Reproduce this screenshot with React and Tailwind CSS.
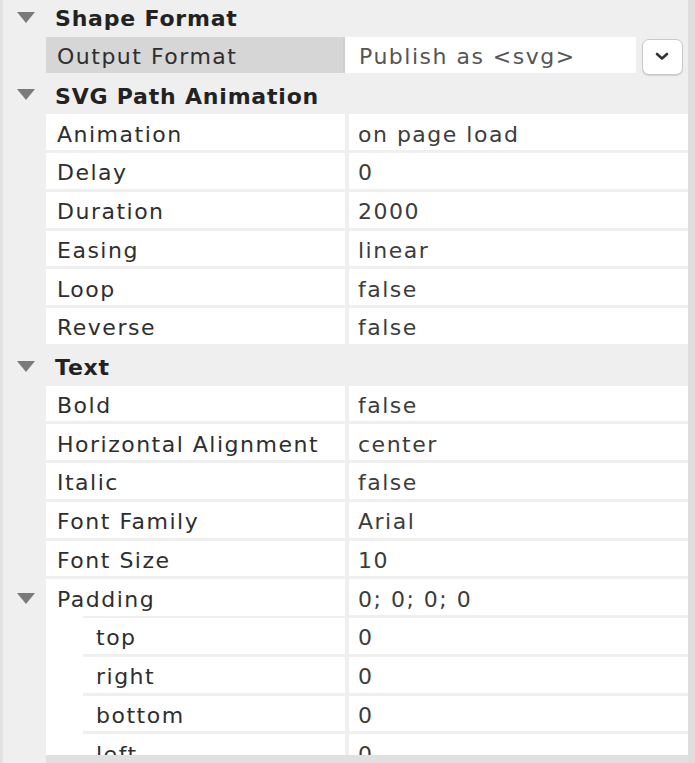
const font = "font-['DejaVu_Sans',sans-serif] text-[22px] tracking-[1.5px]";
const boldFont = "font-['DejaVu_Sans',sans-serif] text-[22px] tracking-[0.8px] font-bold";

function Triangle() {
  return (
    <svg width="18" height="11" viewBox="0 0 18 11" className="block">
      <polygon points="0,0 18,0 9,11" fill="#7a7a7a" />
    </svg>
  );
}

function Header({ title }) {
  return (
    <div className="flex h-[38.75px] items-center shrink-0">
      <div className="w-[46px] shrink-0 pl-[17px]">
        <Triangle />
      </div>
      <div className={`${boldFont} text-[#222] pl-[9px] pt-[3px]`}>{title}</div>
    </div>
  );
}

function Row({ label, value }) {
  return (
    <div className="flex h-[38.75px] shrink-0">
      <div className="w-[46px] shrink-0" />
      <div
        className={`${font} w-[299px] shrink-0 bg-white border-b-[3px] border-[#efefef] flex items-center pl-[11px] pt-[4px] text-[#2e2e2e]`}
      >
        {label}
      </div>
      <div className="w-[4px] shrink-0" />
      <div
        className={`${font} flex-1 bg-white border-b-[3px] border-[#efefef] flex items-center pl-[9px] pt-[4px] text-[#3c3c3c]`}
      >
        {value}
      </div>
    </div>
  );
}

function SubRow({ label, value }) {
  return (
    <div className="flex h-[38.75px] shrink-0">
      <div className="w-[46px] shrink-0" />
      <div className="w-[37px] shrink-0 bg-white" />
      <div
        className={`${font} w-[262px] shrink-0 bg-white border-b-[3px] border-[#efefef] flex items-center pl-[13px] pt-[4px] text-[#2e2e2e]`}
      >
        {label}
      </div>
      <div className="w-[4px] shrink-0" />
      <div
        className={`${font} flex-1 bg-white border-b-[3px] border-[#efefef] flex items-center pl-[9px] pt-[4px] text-[#3c3c3c]`}
      >
        {value}
      </div>
    </div>
  );
}

export default function App() {
  return (
    <div className="w-[695px] h-[763px] overflow-hidden bg-[#efefef] flex">
      <div className="w-[3px] shrink-0 bg-[#e2e2e2]" />
      <div className="flex-1 flex flex-col min-w-0">
        <div className="flex-1 overflow-hidden">
          <div className="flex flex-col mt-[-2px] -ml-[3px]">
            <Header title="Shape Format" />

            {/* Output format with select */}
            <div className="flex h-[38.75px] shrink-0">
              <div className="w-[46px] shrink-0" />
              <div
                className={`${font} w-[297px] shrink-0 bg-[#d6d6d6] border-b-[3px] border-[#efefef] flex items-center pl-[11px] pt-[4px] text-[#2e2e2e]`}
              >
                Output Format
              </div>
              <div className="w-[2px] shrink-0 bg-[#cfcfcf] border-b-[3px] border-[#efefef]" />
              <div
                className={`${font} w-[291px] shrink-0 bg-white border-b-[3px] border-[#efefef] flex items-center pl-[14px] pt-[4px] text-[#555]`}
              >
                Publish as &lt;svg&gt;
              </div>
              <div className="flex-1 flex justify-center pt-[2px]">
                <button className="w-[41px] h-[36px] rounded-[7px] bg-white border border-[#c9c9c9] shadow-[0_1px_1px_rgba(0,0,0,0.12)] flex items-center justify-center">
                  <svg width="14" height="9" viewBox="0 0 14 9">
                    <path
                      d="M2 2 L7 6.5 L12 2"
                      fill="none"
                      stroke="#333"
                      strokeWidth="2.6"
                      strokeLinecap="round"
                      strokeLinejoin="round"
                    />
                  </svg>
                </button>
              </div>
            </div>

            <Header title="SVG Path Animation" />
            <Row label="Animation" value="on page load" />
            <Row label="Delay" value="0" />
            <Row label="Duration" value="2000" />
            <Row label="Easing" value="linear" />
            <Row label="Loop" value="false" />
            <Row label="Reverse" value="false" />

            <Header title="Text" />
            <Row label="Bold" value="false" />
            <Row label="Horizontal Alignment" value="center" />
            <Row label="Italic" value="false" />
            <Row label="Font Family" value="Arial" />
            <Row label="Font Size" value="10" />

            {/* Padding group */}
            <div className="flex h-[38.75px] shrink-0">
              <div className="w-[46px] shrink-0 pl-[17px] flex items-center">
                <Triangle />
              </div>
              <div className="w-[299px] shrink-0 bg-white flex flex-col">
                <div
                  className={`${font} flex-1 flex items-center pl-[11px] pt-[4px] text-[#2e2e2e]`}
                >
                  Padding
                </div>
                <div className="h-[3px] ml-[37px] bg-[#efefef]" />
              </div>
              <div className="w-[4px] shrink-0" />
              <div
                className={`${font} flex-1 bg-white border-b-[3px] border-[#efefef] flex items-center pl-[9px] pt-[4px] text-[#3c3c3c]`}
              >
                0; 0; 0; 0
              </div>
            </div>
            <SubRow label="top" value="0" />
            <SubRow label="right" value="0" />
            <SubRow label="bottom" value="0" />
            <SubRow label="left" value="0" />
          </div>
        </div>
        <div className="h-[8px] shrink-0 ml-[43px] bg-[#e0e0e0]" />
      </div>
      <div className="w-[7px] shrink-0 bg-[#dedede]" />
    </div>
  );
}
